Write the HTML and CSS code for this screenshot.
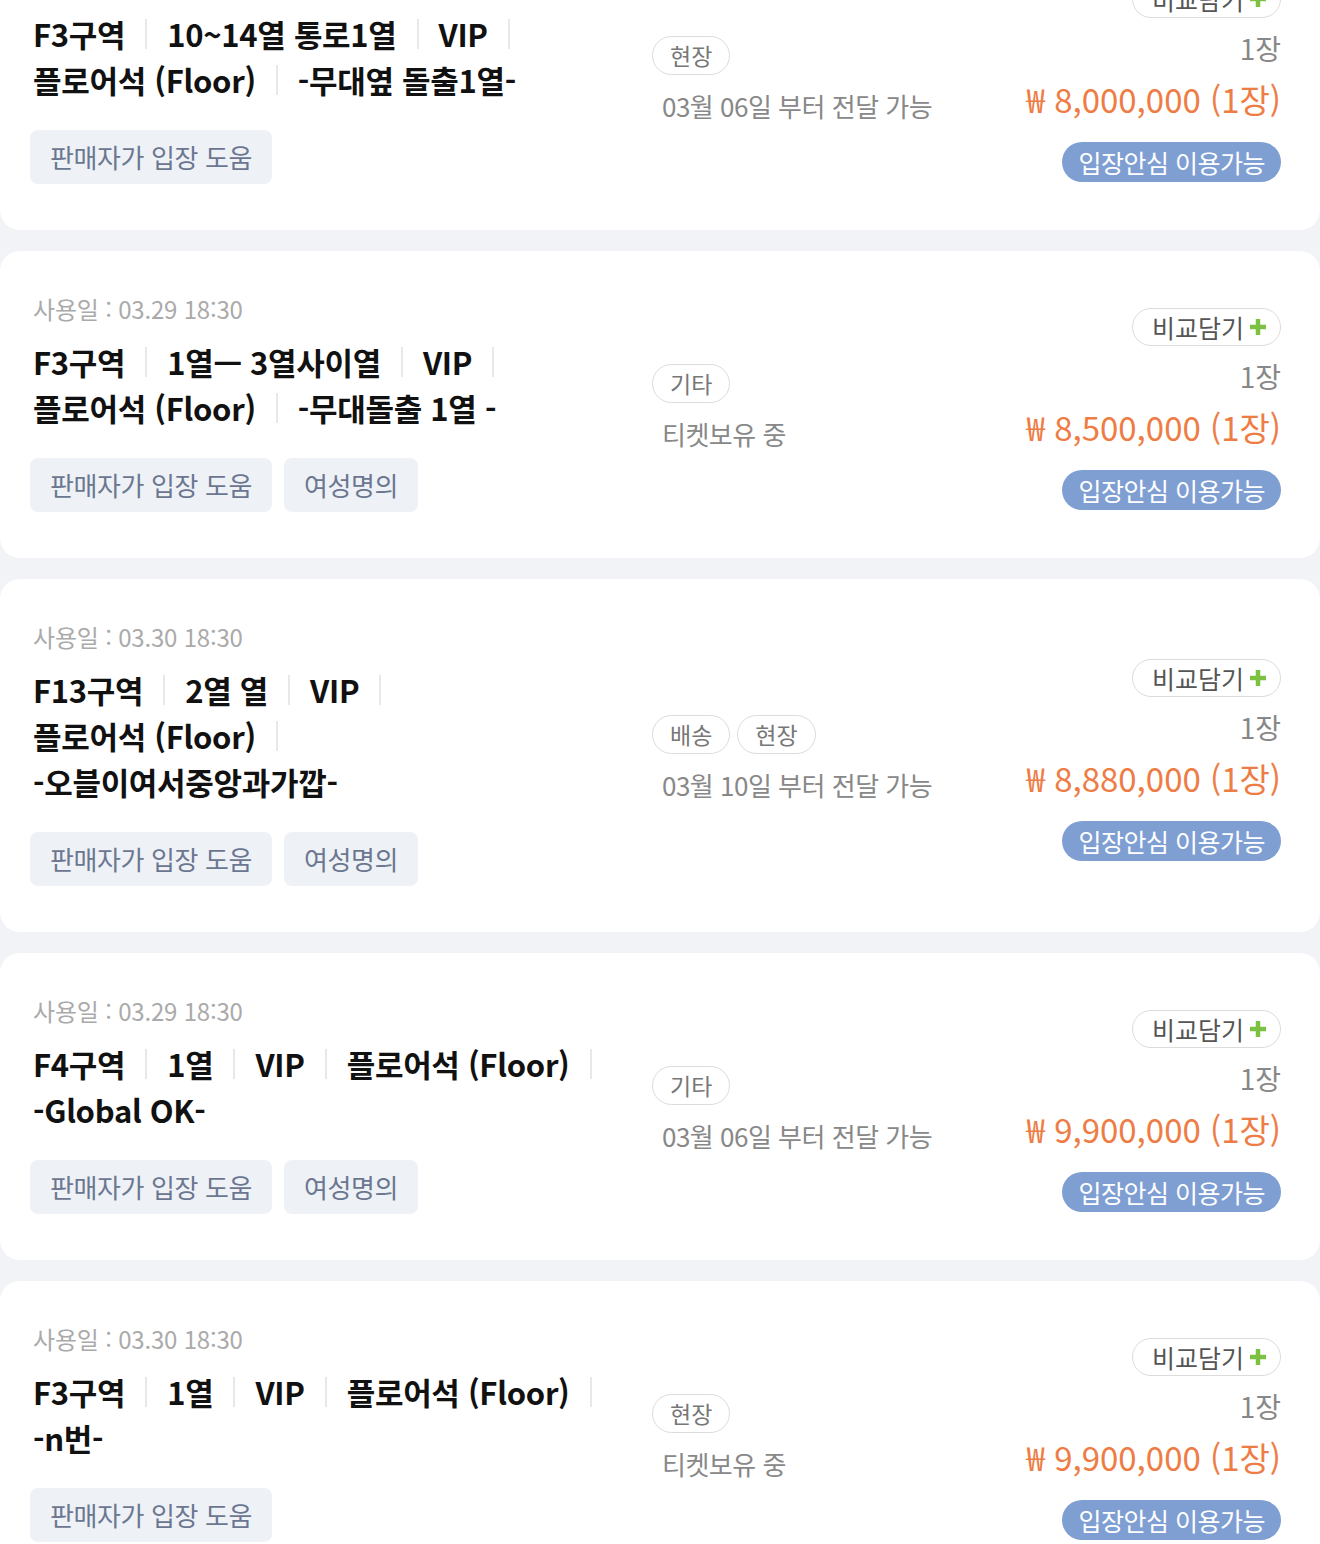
FILE: index.html
```html
<!DOCTYPE html>
<html lang="ko">
<head>
  <meta charset="UTF-8">
  <meta name="viewport" content="width=device-width, initial-scale=1.0">
  <title>티켓 목록</title>
  <link rel="stylesheet" href="styles.css">
</head>
<body>
  <main class="list">
    <!-- 1 -->
    <div class="card">
      <div class="info">
        <p class="use-date">사용일 : 03.29 18:30</p>
        <div class="seat">
          <span>F3구역</span><span>10~14열 통로1열</span><span>VIP</span><span>플로어석 (Floor)</span><span>-무대옆 돌출1열-</span>
        </div>
        <div class="tags">
          <span class="tag">판매자가 입장 도움</span>
        </div>
      </div>
      <div class="delivery">
        <div class="chips"><span class="chip">현장</span></div>
        <p class="delivery-text">03월 06일 부터 전달 가능</p>
      </div>
      <div class="price-box">
        <button class="compare">비교담기<svg viewBox="0 0 20 20"><path d="M10 2v16M2 10h16"/></svg></button>
        <p class="qty">1장</p>
        <p class="price">₩ 8,000,000 (1장)</p>
        <span class="safe">입장안심 이용가능</span>
      </div>
    </div>

    <!-- 2 -->
    <div class="card">
      <div class="info">
        <p class="use-date">사용일 : 03.29 18:30</p>
        <div class="seat">
          <span>F3구역</span><span>1열ㅡ 3열사이열</span><span>VIP</span><span>플로어석 (Floor)</span><span>-무대돌출 1열 -</span>
        </div>
        <div class="tags">
          <span class="tag">판매자가 입장 도움</span><span class="tag">여성명의</span>
        </div>
      </div>
      <div class="delivery">
        <div class="chips"><span class="chip">기타</span></div>
        <p class="delivery-text">티켓보유 중</p>
      </div>
      <div class="price-box">
        <button class="compare">비교담기<svg viewBox="0 0 20 20"><path d="M10 2v16M2 10h16"/></svg></button>
        <p class="qty">1장</p>
        <p class="price">₩ 8,500,000 (1장)</p>
        <span class="safe">입장안심 이용가능</span>
      </div>
    </div>

    <!-- 3 -->
    <div class="card">
      <div class="info">
        <p class="use-date">사용일 : 03.30 18:30</p>
        <div class="seat">
          <span>F13구역</span><span>2열 열</span><span>VIP</span><span>플로어석 (Floor)</span><span>-오블이여서중앙과가깝-</span>
        </div>
        <div class="tags">
          <span class="tag">판매자가 입장 도움</span><span class="tag">여성명의</span>
        </div>
      </div>
      <div class="delivery">
        <div class="chips"><span class="chip">배송</span><span class="chip">현장</span></div>
        <p class="delivery-text">03월 10일 부터 전달 가능</p>
      </div>
      <div class="price-box">
        <button class="compare">비교담기<svg viewBox="0 0 20 20"><path d="M10 2v16M2 10h16"/></svg></button>
        <p class="qty">1장</p>
        <p class="price">₩ 8,880,000 (1장)</p>
        <span class="safe">입장안심 이용가능</span>
      </div>
    </div>

    <!-- 4 -->
    <div class="card">
      <div class="info">
        <p class="use-date">사용일 : 03.29 18:30</p>
        <div class="seat">
          <span>F4구역</span><span>1열</span><span>VIP</span><span>플로어석 (Floor)</span><span>-Global OK-</span>
        </div>
        <div class="tags">
          <span class="tag">판매자가 입장 도움</span><span class="tag">여성명의</span>
        </div>
      </div>
      <div class="delivery">
        <div class="chips"><span class="chip">기타</span></div>
        <p class="delivery-text">03월 06일 부터 전달 가능</p>
      </div>
      <div class="price-box">
        <button class="compare">비교담기<svg viewBox="0 0 20 20"><path d="M10 2v16M2 10h16"/></svg></button>
        <p class="qty">1장</p>
        <p class="price">₩ 9,900,000 (1장)</p>
        <span class="safe">입장안심 이용가능</span>
      </div>
    </div>

    <!-- 5 -->
    <div class="card">
      <div class="info">
        <p class="use-date">사용일 : 03.30 18:30</p>
        <div class="seat">
          <span>F3구역</span><span>1열</span><span>VIP</span><span>플로어석 (Floor)</span><span>-n번-</span>
        </div>
        <div class="tags">
          <span class="tag">판매자가 입장 도움</span>
        </div>
      </div>
      <div class="delivery">
        <div class="chips"><span class="chip">현장</span></div>
        <p class="delivery-text">티켓보유 중</p>
      </div>
      <div class="price-box">
        <button class="compare">비교담기<svg viewBox="0 0 20 20"><path d="M10 2v16M2 10h16"/></svg></button>
        <p class="qty">1장</p>
        <p class="price">₩ 9,900,000 (1장)</p>
        <span class="safe">입장안심 이용가능</span>
      </div>
    </div>
  </main>
</body>
</html>
```

FILE: styles.css
```css
body {
  margin: 0;
  padding: 0;
  background-color: #f2f3f7;
  font-family: "Noto Sans CJK KR", "Noto Sans", sans-serif;
  color: #111;
}
p {
  margin: 0;
}
.list {
  display: flex;
  flex-direction: column;
  gap: 21px;
  margin-top: -77px;
}
.card {
  display: grid;
  grid-template-columns: 565px 1fr auto;
  column-gap: 57px;
  align-items: center;
  background: white;
  border-radius: 20px;
  padding: 41px 39px 46px 30px;
}
.info {
  align-self: start;
}
.use-date {
  font-size: 24px;
  line-height: 34px;
  color: #aaa;
  letter-spacing: -0.2px;
  padding-left: 3px;
}
.seat {
  display: flex;
  flex-wrap: wrap;
  column-gap: 20px;
  margin-top: 13px;
  padding-left: 3px;
  font-size: 31px;
  line-height: 46px;
  font-weight: bold;
  letter-spacing: -0.3px;
}
.seat span {
  display: inline-flex;
  align-items: center;
}
.seat span:not(:last-child)::after {
  content: "";
  width: 2px;
  height: 30px;
  margin-left: 20px;
  background: #e8e8e8;
}
.tags {
  display: flex;
  gap: 12px;
  margin-top: 27px;
}
.tag {
  height: 54px;
  line-height: 54px;
  padding: 0 20px;
  border-radius: 8px;
  background: #eef1f6;
  color: #6b7790;
  font-size: 26px;
  letter-spacing: -0.4px;
}
.delivery {
  margin-top: 12px;
}
.chips {
  display: flex;
  gap: 7px;
}
.chip {
  height: 37px;
  line-height: 37px;
  padding: 0 17px;
  border: 1.5px solid #dcdcdc;
  border-radius: 20px;
  color: #777;
  font-size: 23px;
}
.delivery-text {
  margin-top: 13px;
  padding-left: 10px;
  font-size: 26px;
  line-height: 36px;
  color: #888;
  letter-spacing: -0.5px;
}
.price-box {
  display: flex;
  flex-direction: column;
  align-items: flex-end;
  margin-top: 14px;
}
.compare {
  display: flex;
  align-items: center;
  gap: 4px;
  height: 38px;
  padding: 0 12px 0 19px;
  border: 1.5px solid #dcdcdc;
  border-radius: 20px;
  background: white;
  font-family: inherit;
  font-size: 25px;
  color: #555;
}
.compare svg {
  width: 20px;
  height: 20px;
  stroke: #7dc142;
  stroke-width: 4.5;
  fill: none;
}
.qty {
  margin-top: 10px;
  font-size: 28px;
  line-height: 40px;
  color: #888;
}
.price {
  margin-top: 9px;
  font-size: 33px;
  line-height: 44px;
  color: #ee7d45;
}
.safe {
  margin-top: 21px;
  height: 40px;
  line-height: 40px;
  padding: 0 16px;
  border-radius: 20px;
  background: #7f9fd3;
  color: white;
  font-size: 25px;
  letter-spacing: -0.5px;
}
```
